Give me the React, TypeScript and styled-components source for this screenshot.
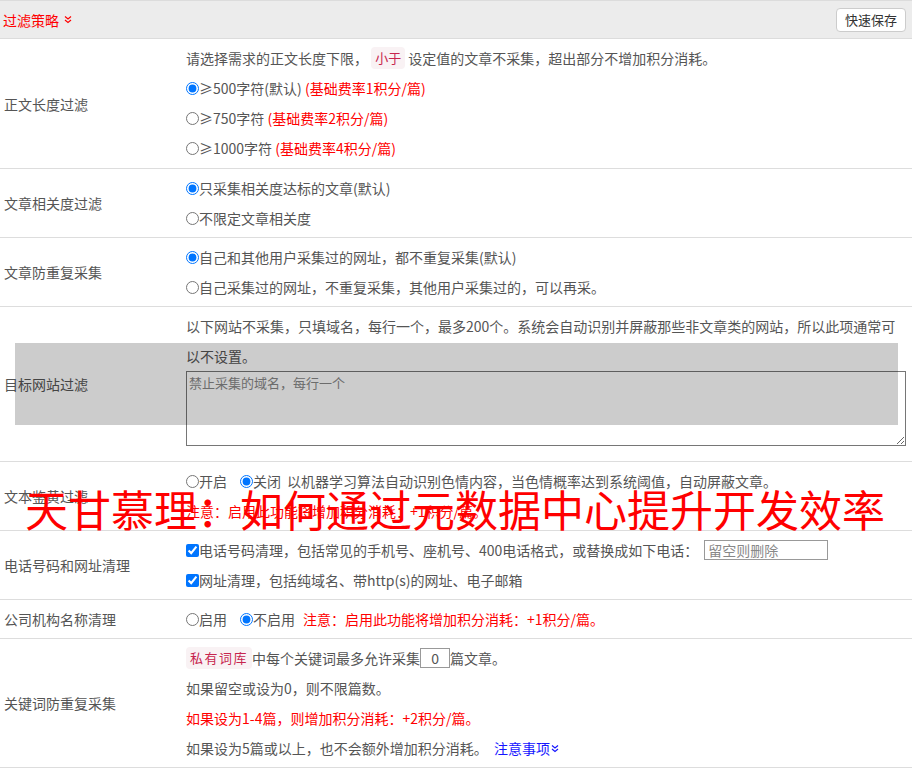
import {ReactNode} from "react";
import styled, {createGlobalStyle} from "styled-components";

const GlobalStyle = createGlobalStyle`
    html, body {
        margin: 0;
        padding: 0;
        background: #fff;
    }
    body {
        font-family: "Noto Sans CJK SC", "Noto Sans", sans-serif;
        font-size: 14px;
        color: #555;
    }
`

const Page = styled.div`
    position: relative;
    width: 912px;
    overflow: hidden;
`

const Header = styled.div`
    display: flex;
    align-items: center;
    justify-content: space-between;
    height: 37px;
    padding: 0 6px 0 3px;
    background: #ececec;
    border-top: 1px solid #dcdcdc;
    border-bottom: 1px solid #dcdcdc;
`

const HeaderTitle = styled.div`
    display: flex;
    align-items: center;
    gap: 5px;
    color: #f00;
    font-size: 14px;
`

const SaveBtn = styled.button`
    height: 24px;
    padding: 0 8px;
    background: #fff;
    border: 1px solid #ccc;
    border-radius: 4px;
    color: #333;
    font-family: inherit;
    font-size: 13px;
    line-height: 22px;
`

const Row = styled.div`
    display: grid;
    grid-template-columns: 186px 1fr;
    border-bottom: 1px solid #ddd;
`

const Label = styled.div`
    display: flex;
    align-items: center;
    padding-left: 4px;
    color: #555;
`

const Content = styled.div<{ $pb?: number }>`
    padding: 4px 6px ${p => p.$pb ?? 4}px 0;
    line-height: 30px;
    color: #555;
`

const Line = styled.div<{ $red?: boolean }>`
    display: flex;
    align-items: center;
    height: 30px;
    white-space: pre;
    color: ${p => p.$red ? '#f00' : 'inherit'};
`

const WrapText = styled.div`
    line-height: 30px;
`

const Red = styled.span`
    color: #f00;
`

const Blue = styled.span`
    color: #1515ff;
    display: inline-flex;
    align-items: center;
    gap: 1px;
`

const Code = styled.span<{ $spaced?: boolean }>`
    display: inline-block;
    padding: 0 4px;
    line-height: 22px;
    font-size: 13px;
    color: #c7254e;
    background: #f9f2f4;
    border-radius: 4px;
    letter-spacing: ${p => p.$spaced ? '1.5px' : '0'};
`

const Choice = styled.label<{ $gap?: number }>`
    display: inline-flex;
    align-items: center;
    margin-right: ${p => p.$gap ?? 0}px;

    input {
        width: 13px;
        height: 13px;
        margin: 0;
    }
`

const TextArea = styled.textarea`
    display: block;
    box-sizing: border-box;
    width: 720px;
    height: 75px;
    margin: 0 0 11px;
    padding: 2px;
    border: 1px solid #767676;
    font-family: inherit;
    font-size: 13px;
    line-height: 18px;
    color: #555;
    resize: vertical;

    &::placeholder {
        color: #888;
    }
`

const SmallInput = styled.input<{ $w: number; $center?: boolean }>`
    box-sizing: border-box;
    width: ${p => p.$w}px;
    height: 20px;
    margin-left: ${p => p.$center ? 0 : 6}px;
    padding: 0 3px;
    border: 1px solid #999;
    font-family: inherit;
    font-size: 14px;
    color: #555;
    text-align: ${p => p.$center ? 'center' : 'left'};

    &::placeholder {
        color: #888;
    }
`

const Shade = styled.div`
    position: absolute;
    left: 15px;
    top: 343px;
    width: 883px;
    height: 82px;
    background: rgba(0, 0, 0, 0.2);
    pointer-events: none;
`

const Watermark = styled.div`
    position: absolute;
    left: 25px;
    top: 480px;
    font-size: 43px;
    line-height: 56px;
    color: #f00;
    white-space: nowrap;
    pointer-events: none;
`

const Chevrons = ({color}: { color: string }) => (
    <svg width="8" height="9" viewBox="0 0 8 9" fill="none" stroke={color} strokeWidth="1.2">
        <path d="M1 1.5 L4 4 L7 1.5"/>
        <path d="M1 5 L4 7.5 L7 5"/>
    </svg>
)

const Radio = ({name, checked, children, gap}: { name: string, checked?: boolean, children: ReactNode, gap?: number }) => (
    <Choice $gap={gap}>
        <input type="radio" name={name} defaultChecked={checked}/>
        {children}
    </Choice>
)

const Check = ({children}: { children: ReactNode }) => (
    <Choice>
        <input type="checkbox" defaultChecked/>
        {children}
    </Choice>
)

export default function App() {
    return (<Page>
        <GlobalStyle/>
        <Header>
            <HeaderTitle>过滤策略 <Chevrons color="#f00"/></HeaderTitle>
            <SaveBtn>快速保存</SaveBtn>
        </Header>

        <Row>
            <Label>正文长度过滤</Label>
            <Content $pb={5}>
                <Line>请选择需求的正文长度下限， <Code>小于</Code> 设定值的文章不采集，超出部分不增加积分消耗。</Line>
                <Line><Radio name="len" checked>≥500字符(默认) <Red>(基础费率1积分/篇)</Red></Radio></Line>
                <Line><Radio name="len">≥750字符 <Red>(基础费率2积分/篇)</Red></Radio></Line>
                <Line><Radio name="len">≥1000字符 <Red>(基础费率4积分/篇)</Red></Radio></Line>
            </Content>
        </Row>

        <Row>
            <Label>文章相关度过滤</Label>
            <Content>
                <Line><Radio name="rel" checked>只采集相关度达标的文章(默认)</Radio></Line>
                <Line><Radio name="rel">不限定文章相关度</Radio></Line>
            </Content>
        </Row>

        <Row>
            <Label>文章防重复采集</Label>
            <Content>
                <Line><Radio name="dup" checked>自己和其他用户采集过的网址，都不重复采集(默认)</Radio></Line>
                <Line><Radio name="dup">自己采集过的网址，不重复采集，其他用户采集过的，可以再采。</Radio></Line>
            </Content>
        </Row>

        <Row>
            <Label>目标网站过滤</Label>
            <Content>
                <WrapText>以下网站不采集，只填域名，每行一个，最多200个。系统会自动识别并屏蔽那些非文章类的网站，所以此项通常可以不设置。</WrapText>
                <TextArea placeholder="禁止采集的域名，每行一个"/>
            </Content>
        </Row>

        <Row>
            <Label>文本鉴黄过滤</Label>
            <Content>
                <Line>
                    <Radio name="porn" gap={13}>开启</Radio>
                    <Radio name="porn" checked gap={6}>关闭</Radio>
                    以机器学习算法自动识别色情内容，当色情概率达到系统阈值，自动屏蔽文章。
                </Line>
                <Line $red>注意：启用此功能将增加积分消耗：+1积分/篇。</Line>
            </Content>
        </Row>

        <Row>
            <Label>电话号码和网址清理</Label>
            <Content>
                <Line><Check>电话号码清理，包括常见的手机号、座机号、400电话格式，或替换成如下电话：</Check><SmallInput $w={124} placeholder="留空则删除"/></Line>
                <Line><Check>网址清理，包括纯域名、带http(s)的网址、电子邮箱</Check></Line>
            </Content>
        </Row>

        <Row>
            <Label>公司机构名称清理</Label>
            <Content>
                <Line>
                    <Radio name="org" gap={13}>启用</Radio>
                    <Radio name="org" checked gap={8}>不启用</Radio>
                    <Red>注意：启用此功能将增加积分消耗：+1积分/篇。</Red>
                </Line>
            </Content>
        </Row>

        <Row>
            <Label>关键词防重复采集</Label>
            <Content>
                <Line><Code $spaced>私有词库</Code>中每个关键词最多允许采集<SmallInput $w={30} $center defaultValue="0"/>篇文章。</Line>
                <Line>如果留空或设为0，则不限篇数。</Line>
                <Line $red>如果设为1-4篇，则增加积分消耗：+2积分/篇。</Line>
                <Line>如果设为5篇或以上，也不会额外增加积分消耗。  <Blue>注意事项<Chevrons color="#1515ff"/></Blue></Line>
            </Content>
        </Row>

        <Shade/>
        <Watermark>天甘慕理：如何通过元数据中心提升开发效率</Watermark>
    </Page>)
}
